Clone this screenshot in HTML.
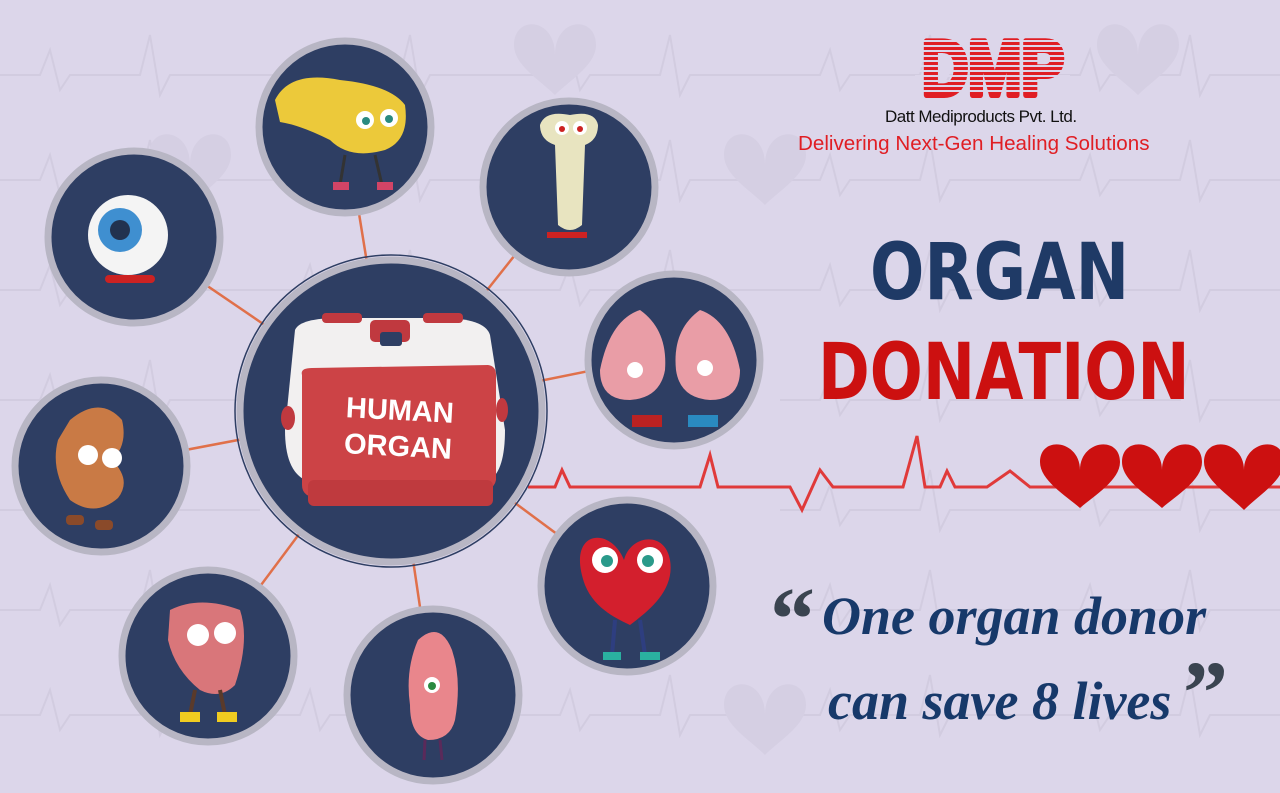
<!DOCTYPE html>
<html><head><meta charset="utf-8"><style>
html,body{margin:0;padding:0}
body{width:1280px;height:793px;overflow:hidden;background:#dcd6ea;position:relative;font-family:"Liberation Sans",sans-serif}
svg{position:absolute;left:0;top:0}
.t{position:absolute;white-space:nowrap}
</style></head><body>
<svg width="1280" height="793" viewBox="0 0 1280 793">
<defs>
<g id="bgp"><path d="M0 0 H40 L50 -25 L60 15 L70 0 H140 L150 -40 L160 20 L170 0 H260" fill="none" stroke="#d2cce0" stroke-width="2"/></g>
<path id="hrt" d="M0 30 C0 -8 -41 -10 -41 20 C-41 40 -15 55 0 70 C15 55 41 40 41 20 C41 -10 0 -8 0 30Z"/>
</defs>
<g>
<use href="#bgp" x="0" y="75"/><use href="#bgp" x="260" y="75"/><use href="#bgp" x="520" y="75"/><use href="#bgp" x="780" y="75"/><use href="#bgp" x="1040" y="75"/>
<use href="#bgp" x="0" y="180"/><use href="#bgp" x="260" y="180"/><use href="#bgp" x="520" y="180"/><use href="#bgp" x="780" y="180"/><use href="#bgp" x="1040" y="180"/>
<use href="#bgp" x="0" y="290"/><use href="#bgp" x="260" y="290"/><use href="#bgp" x="520" y="290"/><use href="#bgp" x="780" y="290"/><use href="#bgp" x="1040" y="290"/>
<use href="#bgp" x="0" y="400"/><use href="#bgp" x="780" y="400"/><use href="#bgp" x="1040" y="400"/>
<use href="#bgp" x="0" y="510"/><use href="#bgp" x="780" y="510"/><use href="#bgp" x="1040" y="510"/>
<use href="#bgp" x="0" y="610"/><use href="#bgp" x="780" y="610"/><use href="#bgp" x="1040" y="610"/>
<use href="#bgp" x="0" y="715"/><use href="#bgp" x="260" y="715"/><use href="#bgp" x="520" y="715"/><use href="#bgp" x="780" y="715"/><use href="#bgp" x="1040" y="715"/>
</g>
<g fill="#d5cfe3">
<use href="#hrt" x="555" y="25"/>
<use href="#hrt" x="1138" y="25"/>
<use href="#hrt" x="765" y="135"/>
<use href="#hrt" x="190" y="135"/>
<use href="#hrt" x="765" y="685"/>
</g>
<g stroke="#e0704a" stroke-width="2.5">
<line x1="391" y1="411" x2="345" y2="127"/><line x1="391" y1="411" x2="569" y2="187"/>
<line x1="391" y1="411" x2="134" y2="236"/><line x1="391" y1="411" x2="673" y2="354"/>
<line x1="391" y1="411" x2="101" y2="466"/><line x1="391" y1="411" x2="627" y2="586"/>
<line x1="391" y1="411" x2="208" y2="656"/><line x1="391" y1="411" x2="433" y2="695"/>
</g>
<path d="M528 487 H555 L562 470 L570 487 H700 L710 455 L718 487 H745 L760 487 H790 L802 510 L820 470 L833 487 H903 L917 436 L925 487 H940 L947 471 L955 487 H987 L1010 471 L1030 487 H1280" fill="none" stroke="#e03a3a" stroke-width="3"/>
<g fill="#cc1010">
<path d="M1080 470 C1080 440 1040 435 1040 462 C1040 480 1065 495 1080 508 C1095 495 1120 480 1120 462 C1120 435 1080 440 1080 470Z"/>
<path d="M1162 470 C1162 440 1122 435 1122 462 C1122 480 1147 495 1162 508 C1177 495 1202 480 1202 462 C1202 435 1162 440 1162 470Z"/>
<path d="M1244 470 C1244 440 1204 435 1204 462 C1204 480 1229 495 1244 510 C1259 495 1284 480 1284 462 C1284 435 1244 440 1244 470Z"/>
</g>
<g stroke="#b8b6c4" stroke-width="7" fill="#2e3e63">
<circle cx="391" cy="411" r="151"/>
<circle cx="345" cy="127" r="86"/><circle cx="569" cy="187" r="86"/>
<circle cx="134" cy="237" r="86"/><circle cx="674" cy="360" r="86"/>
<circle cx="101" cy="466" r="86"/><circle cx="627" cy="586" r="86"/>
<circle cx="208" cy="656" r="86"/><circle cx="433" cy="695" r="86"/>
</g>
<circle cx="391" cy="411" r="156" fill="none" stroke="#2e3e63" stroke-width="1.5"/>
<path d="M295 330 Q300 318 340 318 L440 318 Q485 318 490 335 L505 430 Q505 470 490 480 L305 480 Q285 470 285 430Z" fill="#f2f0f0"/>
<rect x="370" y="320" width="40" height="22" rx="5" fill="#c0393f"/>
<rect x="380" y="332" width="22" height="14" rx="3" fill="#2e3e63"/>
<rect x="322" y="313" width="40" height="10" rx="4" fill="#c0393f"/>
<rect x="423" y="313" width="40" height="10" rx="4" fill="#c0393f"/>
<path d="M302 375 Q300 368 312 368 L488 365 Q496 366 496 375 L496 480 Q494 492 470 495 L318 498 Q302 497 302 485Z" fill="#cc4346"/>
<rect x="308" y="480" width="185" height="26" rx="6" fill="#bf3a3e"/>
<ellipse cx="288" cy="418" rx="7" ry="12" fill="#c0393f"/><ellipse cx="502" cy="410" rx="6" ry="12" fill="#c0393f"/>
<path d="M275 100 Q290 70 340 80 Q390 85 405 105 Q410 140 385 150 Q350 160 330 140 Q300 125 280 122Z" fill="#ecc93a"/>
<circle cx="365" cy="120" r="9" fill="#fff"/><circle cx="389" cy="118" r="9" fill="#fff"/>
<circle cx="366" cy="121" r="4" fill="#2a8a80"/><circle cx="389" cy="119" r="4" fill="#2a8a80"/>
<path d="M345 155 L340 185 M375 155 L382 185" stroke="#333" stroke-width="3"/>
<rect x="333" y="182" width="16" height="8" fill="#d24466"/><rect x="377" y="182" width="16" height="8" fill="#d24466"/>
<path d="M540 125 Q545 110 570 115 Q595 110 598 125 Q598 140 585 145 L582 225 Q570 235 558 225 L555 145 Q540 140 540 125Z" fill="#e8e4c0"/>
<circle cx="562" cy="128" r="7" fill="#fff"/><circle cx="580" cy="128" r="7" fill="#fff"/>
<circle cx="562" cy="129" r="3" fill="#c22"/><circle cx="580" cy="129" r="3" fill="#c22"/>
<rect x="547" y="232" width="40" height="6" fill="#c22"/>
<circle cx="128" cy="235" r="40" fill="#f4f4f4"/><circle cx="120" cy="230" r="22" fill="#3f8fd0"/><circle cx="120" cy="230" r="10" fill="#22324f"/>
<rect x="105" y="275" width="50" height="8" rx="4" fill="#c22"/>
<path d="M640 310 Q610 320 600 370 Q600 400 630 400 Q660 398 665 370 Q668 330 640 310Z" fill="#e99da6"/>
<path d="M700 310 Q730 320 740 370 Q740 400 710 400 Q680 398 676 370 Q672 330 700 310Z" fill="#e99da6"/>
<circle cx="635" cy="370" r="8" fill="#fff"/><circle cx="705" cy="368" r="8" fill="#fff"/>
<rect x="632" y="415" width="30" height="12" fill="#b22"/><rect x="688" y="415" width="30" height="12" fill="#2a8ac0"/>
<path d="M70 420 Q100 395 122 420 Q128 445 112 460 Q132 480 118 498 Q95 518 70 500 Q50 470 58 440Z" fill="#c97a45"/>
<circle cx="88" cy="455" r="10" fill="#fff"/><circle cx="112" cy="458" r="10" fill="#fff"/>
<rect x="66" y="515" width="18" height="10" rx="4" fill="#8a4a2a"/><rect x="95" y="520" width="18" height="10" rx="4" fill="#8a4a2a"/>
<path d="M624 560 C610 525 565 530 585 585 C595 610 620 620 630 625 C650 610 675 590 670 560 C665 530 630 535 624 560Z" fill="#d31f2d"/>
<circle cx="605" cy="560" r="13" fill="#fff"/><circle cx="650" cy="560" r="13" fill="#fff"/>
<circle cx="607" cy="561" r="6" fill="#2a9a8a"/><circle cx="648" cy="561" r="6" fill="#2a9a8a"/>
<path d="M615 620 L612 655 M640 620 L645 655" stroke="#2e3e80" stroke-width="4"/>
<rect x="603" y="652" width="18" height="8" fill="#2ab0a0"/><rect x="640" y="652" width="20" height="8" fill="#2ab0a0"/>
<path d="M170 610 Q200 595 240 610 Q250 640 235 685 Q220 700 200 690 Q175 670 168 640Z" fill="#d9767a"/>
<circle cx="198" cy="635" r="11" fill="#fff"/><circle cx="225" cy="633" r="11" fill="#fff"/>
<path d="M195 690 L190 715 M220 690 L225 715" stroke="#5a3a2a" stroke-width="4"/>
<rect x="180" y="712" width="20" height="10" fill="#f0cc20"/><rect x="217" y="712" width="20" height="10" fill="#f0cc20"/>
<path d="M418 640 Q440 620 452 650 Q462 680 455 720 Q450 740 428 740 Q410 735 410 705 Q405 670 418 640Z" fill="#e9868c"/>
<circle cx="432" cy="685" r="8" fill="#fff"/><circle cx="432" cy="686" r="4" fill="#2a8a40"/>
<path d="M425 740 L424 760 M440 740 L442 760" stroke="#5a2a5a" stroke-width="3"/>
<text x="922" y="95" font-family="Liberation Sans, sans-serif" font-weight="bold" font-size="78" fill="#e01e24" stroke="#e01e24" stroke-width="6" stroke-linejoin="round" textLength="142" lengthAdjust="spacingAndGlyphs">DMP</text>
<g stroke="#dcd6ea" stroke-width="2">
<line x1="915" y1="41" x2="1070" y2="41"/><line x1="915" y1="46" x2="1070" y2="46"/><line x1="915" y1="51" x2="1070" y2="51"/><line x1="915" y1="56" x2="1070" y2="56"/><line x1="915" y1="61" x2="1070" y2="61"/><line x1="915" y1="66" x2="1070" y2="66"/><line x1="915" y1="71" x2="1070" y2="71"/><line x1="915" y1="76" x2="1070" y2="76"/><line x1="915" y1="81" x2="1070" y2="81"/><line x1="915" y1="86" x2="1070" y2="86"/><line x1="915" y1="91" x2="1070" y2="91"/>
</g>
</svg>
<div class="t" style="left:885px;top:107px;font-size:17px;color:#111;letter-spacing:-0.5px">Datt Mediproducts Pvt. Ltd.</div>
<div class="t" style="left:798px;top:133px;font-size:20px;color:#e01e24;transform-origin:0 0;transform:scaleX(1.03)">Delivering Next-Gen Healing Solutions</div>
<div class="t" style="left:870px;top:228px;font-size:78px;font-weight:bold;color:#1f3a66;font-family:'DejaVu Sans',sans-serif;transform-origin:0 0;transform:scaleX(0.82)">ORGAN</div>
<div class="t" style="left:818px;top:328px;font-size:78px;font-weight:bold;color:#cc1010;font-family:'DejaVu Sans',sans-serif;transform-origin:0 0;transform:scaleX(0.8)">DONATION</div>
<div class="t" style="left:345px;top:393px;font-size:29px;font-weight:bold;color:#fff;line-height:36px;text-align:center;transform:rotate(3deg)">HUMAN<br>ORGAN</div>
<div class="t" style="left:770px;top:568px;font-size:90px;color:#3a4450;font-family:'Liberation Serif',serif;font-weight:bold">“</div>
<div class="t" style="left:822px;top:585px;font-size:54px;color:#17396a;font-style:italic;font-weight:bold;font-family:'Liberation Serif',serif">One organ donor</div>
<div class="t" style="left:828px;top:670px;font-size:54px;color:#17396a;font-style:italic;font-weight:bold;font-family:'Liberation Serif',serif">can save 8 lives</div>
<div class="t" style="left:1183px;top:642px;font-size:90px;color:#3a4450;font-family:'Liberation Serif',serif;font-weight:bold">”</div>
</body></html>
